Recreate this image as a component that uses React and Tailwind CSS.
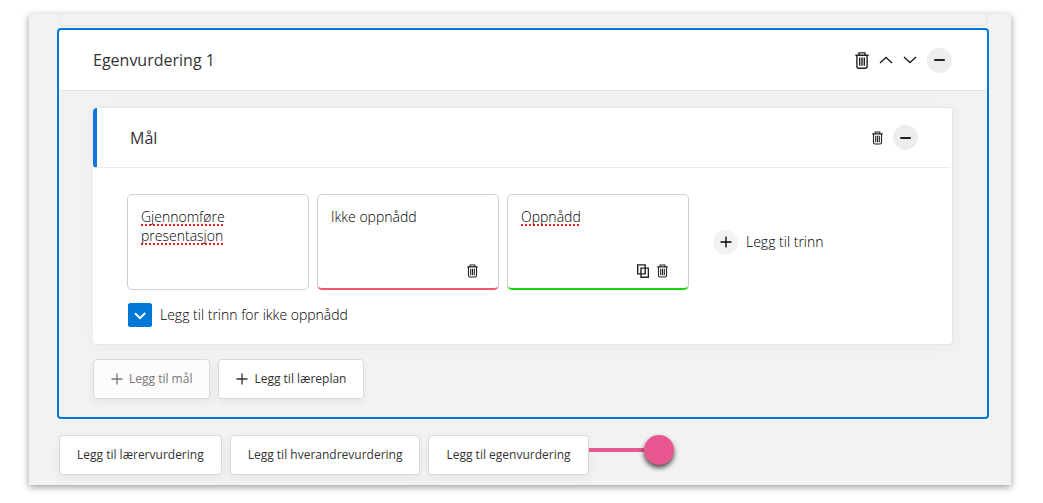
import { useState } from "react";

function Trash({ className }) {
  return (
    <svg viewBox="0 0 14 17" className={className} fill="none" stroke="currentColor" strokeWidth="1.4">
      <path d="M0.3 3.2H13.7M4 3V0.9H10V3M1.9 3.5V14.3Q1.9 16.2 3.8 16.2H10.2Q12.1 16.2 12.1 14.3V3.5" />
      <path d="M4.7 5.6V13.8M7 5.6V13.8M9.3 5.6V13.8" />
    </svg>
  );
}

function Chevron({ d }) {
  return (
    <svg viewBox="0 0 14 8" className="h-2 w-3.5" fill="none" stroke="currentColor" strokeWidth="1.4">
      <path d={d} />
    </svg>
  );
}

function Plus({ className }) {
  return (
    <svg viewBox="0 0 12 12" className={className} fill="none" stroke="currentColor" strokeWidth="1.3">
      <path d="M6 0.5V11.5M0.5 6H11.5" />
    </svg>
  );
}

function Copy() {
  return (
    <svg viewBox="0 0 12 14" className="h-3.5 w-3" fill="none" stroke="currentColor" strokeWidth="1.4">
      <path d="M0.7 0.9H8.2V9.9H0.7ZM4 4.1H11.4V13.2H4Z" />
    </svg>
  );
}

function Collapse() {
  return (
    <button aria-label="Skjul" className="grid size-[25px] place-items-center rounded-full bg-[#ededed]">
      <span className="h-[2px] w-[11px] rounded-full bg-[#222]" />
    </button>
  );
}

const levels = [
  { text: "Gjennomføre\npresentasjon", box: "border-b", misspelt: true },
  { text: "Ikke oppnådd", box: "border-b-2 border-b-[#f5576b]", trash: true },
  { text: "Oppnådd", box: "border-b-2 border-b-[#1ed40e]", misspelt: true, copy: true, trash: true },
];

function Level({ level }) {
  return (
    <div className={`relative h-24 w-[182px] rounded-[5px] border border-[#cfcfcf] bg-white ${level.box}`}>
      <textarea
        aria-label={level.text}
        defaultValue={level.text}
        spellCheck={false}
        className={`block h-16 w-full resize-none overflow-hidden px-[13px] pt-3 text-sm leading-[19px] font-light text-black outline-none ${
          level.misspelt ? "underline decoration-[#f01c1c] decoration-dotted decoration-2 underline-offset-2 [text-decoration-skip-ink:none]" : ""
        }`}
      />
      <div className="absolute right-5 bottom-2.5 flex items-center gap-2 text-[#222]">
        {level.copy && <button aria-label="Kopier"><Copy /></button>}
        {level.trash && <button aria-label="Slett"><Trash className="h-3.5 w-[11px]" /></button>}
      </div>
    </div>
  );
}

function Btn({ children, disabled }) {
  return (
    <button
      disabled={disabled}
      className="flex h-10 items-center gap-1.5 rounded border border-[#d9d9d9] bg-white px-[17px] text-xs shadow-[0_3px_8px_rgba(0,0,0,0.06)] disabled:bg-[#fcfcfc] disabled:text-[#777]"
    >
      {children}
    </button>
  );
}

export default function App() {
  const [notReached, setNotReached] = useState(true);

  return (
    <div className="bg-white pt-3.5 pr-8 pb-[18px] pl-[29px] font-['Open_Sans','Noto_Sans',sans-serif] text-[#333]">
      <main className="bg-[#f2f2f2] pr-[22px] pb-2.5 pl-7 shadow-[0_2px_7px_rgba(0,0,0,0.4)]">
        <div className="mx-[2px] h-3 rounded-b border border-t-0 border-[#e6e6e6]" />

        <section className="mt-[2px] rounded border-2 border-[#0078d7]">
          <header className="flex h-[61px] items-center rounded border-b border-[#e4e4e4] bg-white pr-[35px] pl-[34px]">
            <h2 className="flex-1 text-base">Egenvurdering 1</h2>
            <div className="flex items-center gap-2.5 text-[#222]">
              <button aria-label="Slett"><Trash className="h-[17px] w-3.5" /></button>
              <button aria-label="Flytt opp"><Chevron d="M1 7L7 1.4L13 7" /></button>
              <button aria-label="Flytt ned"><Chevron d="M1 1L7 6.6L13 1" /></button>
              <Collapse />
            </div>
          </header>

          <div className="px-[34px] pt-4 pb-[18px]">
            <div className="rounded border border-l-0 border-[#e6e6e6] bg-white shadow-[0_2px_14px_rgba(0,0,0,0.04)]">
              <header className="flex h-[60px] items-center rounded border-b border-l-4 border-b-[#ebebeb] border-l-[#0f76dc] pr-[34px] pl-[33px]">
                <h3 className="flex-1 text-base">Mål</h3>
                <div className="flex items-center gap-2.5 text-[#222]">
                  <button aria-label="Slett"><Trash className="h-3.5 w-[11px]" /></button>
                  <Collapse />
                </div>
              </header>

              <div className="px-[34px] pt-[26px] pb-[17px]">
                <div className="flex items-center gap-2">
                  {levels.map((level) => (
                    <Level key={level.text} level={level} />
                  ))}
                  <button className="ml-4 flex items-center gap-2 text-sm font-light text-black">
                    <span className="grid size-[25px] place-items-center rounded-full bg-[#f3f3f3]">
                      <Plus className="size-3" />
                    </span>
                    Legg til trinn
                  </button>
                </div>

                <label className="mt-[13px] flex w-fit items-center gap-2 pl-px text-sm leading-6 font-light text-black">
                  <span className="grid size-6">
                    <input
                      type="checkbox"
                      checked={notReached}
                      onChange={(e) => setNotReached(e.target.checked)}
                      className="peer col-start-1 row-start-1 appearance-none rounded-[2px] border border-[#0078d7] checked:bg-[#0078d7]"
                    />
                    <svg viewBox="0 0 24 24" fill="none" stroke="#fff" strokeWidth="2" className="pointer-events-none invisible col-start-1 row-start-1 peer-checked:visible">
                      <path d="M7 10.2L12 15.2L17.2 10" />
                    </svg>
                  </span>
                  Legg til trinn for ikke oppnådd
                </label>
              </div>
            </div>

            <div className="mt-3.5 flex gap-2">
              <Btn disabled><Plus className="size-3" />Legg til mål</Btn>
              <Btn><Plus className="size-3" />Legg til læreplan</Btn>
            </div>
          </div>
        </section>

        <div className="mt-4 ml-[2px] flex items-start gap-2">
          <Btn>Legg til lærervurdering</Btn>
          <Btn>Legg til hverandrevurdering</Btn>
          <div className="flex items-start">
            <Btn>Legg til egenvurdering</Btn>
            <div className="flex items-center">
              <div className="h-1 w-[55px] bg-[#e8578f]" />
              <div className="size-[30px] rounded-full bg-[#e8578f] shadow-[0_3px_5px_rgba(0,0,0,0.7)]" />
            </div>
          </div>
        </div>
      </main>
    </div>
  );
}
